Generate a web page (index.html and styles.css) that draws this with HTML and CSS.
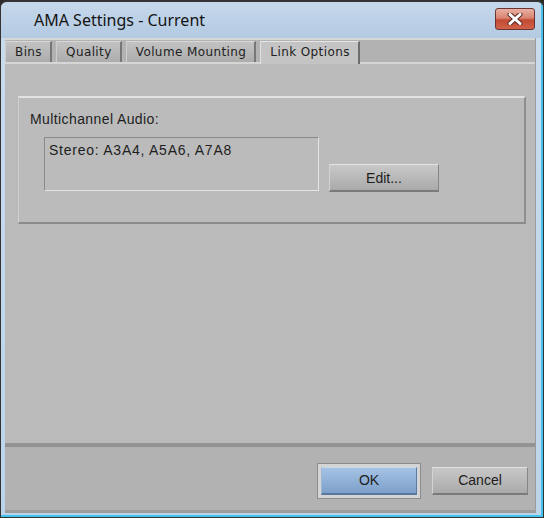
FILE: index.html
```html
<!DOCTYPE html>
<html lang="en">
  <head>
    <meta charset="UTF-8" />
    <meta name="viewport" content="width=device-width, initial-scale=1.0" />
    <title>AMA Settings - Current</title>
    <link rel="stylesheet" href="styles.css">
  </head>
  <body>
    <div class="window">
      <div class="titlebar">
        <span class="title">AMA Settings - Current</span>
        <button class="close" aria-label="Close">
          <svg width="18" height="12" viewBox="0 0 18 12">
            <path d="M4 1.5 L14 10.5 M14 1.5 L4 10.5" stroke="#5b2a24" stroke-width="5" stroke-linecap="round" />
            <path d="M4 1.5 L14 10.5 M14 1.5 L4 10.5" stroke="#ffffff" stroke-width="3" stroke-linecap="round" />
          </svg>
        </button>
      </div>
      <div class="client">
        <div class="tabs">
          <div class="tab">Bins</div>
          <div class="tab">Quality</div>
          <div class="tab">Volume Mounting</div>
          <div class="tab active">Link Options</div>
        </div>
        <div class="pane">
          <div class="group">
            <div class="label">Multichannel Audio:</div>
            <div class="row">
              <div class="field">Stereo: A3A4, A5A6, A7A8</div>
              <button class="btn edit">Edit...</button>
            </div>
          </div>
        </div>
        <div class="footer">
          <div class="focus">
            <button class="btn primary">OK</button>
          </div>
          <button class="btn cancel">Cancel</button>
        </div>
      </div>
    </div>
  </body>
</html>
```

FILE: styles.css
```css
body {
  margin: 0;
  background: #2b2b2b;
  font-family: "Liberation Sans", Arial, sans-serif;
}
.window {
  width: 544px;
  height: 518px;
  box-sizing: border-box;
  display: flex;
  flex-direction: column;
  border: 1px solid #333;
  border-top-width: 2px;
  border-radius: 7px 7px 0 0;
  padding: 0 7px 4px 4px;
  background: linear-gradient(#c6d8eb, #b3cae2 36px, #c9dcee 36px, #bcd4ea);
  box-shadow: inset -2px -2px 0 #42c2ee;
}
.titlebar {
  height: 36px;
  display: flex;
  align-items: center;
  padding: 0 1px 0 29px;
}
.title {
  font-family: "Noto Sans", sans-serif;
  font-size: 16px;
  color: #141414;
}
.close {
  margin-left: auto;
  align-self: flex-start;
  margin-top: 6px;
  width: 40px;
  height: 22px;
  padding: 0;
  display: flex;
  align-items: center;
  justify-content: center;
  border: 1px solid #6a3530;
  border-radius: 3px;
  background: linear-gradient(#eab0a4, #d98470 45%, #c24a33 55%, #d0634a);
}
.client {
  flex: 1;
  display: flex;
  flex-direction: column;
  background: #bababa;
  border-right: 1px solid #9a9a9a;
}
.tabs {
  display: flex;
  align-items: flex-end;
  height: 24px;
  background: linear-gradient(#d6d6d6 0 2px, #b2b2b2 2px);
}
.tab {
  height: 20px;
  line-height: 20px;
  padding: 0 8px 0 9px;
  margin-right: 4px;
  font-family: "DejaVu Sans", Verdana, sans-serif;
  font-size: 12px;
  letter-spacing: 0.4px;
  color: #222;
  background: linear-gradient(#c2c2c2, #acacac);
  border-top: 1px solid #d8d8d8;
  border-left: 1px solid #cdcdcd;
  border-right: 2px solid #777;
}
.tab.active {
  position: relative;
  height: 22px;
  margin-bottom: -2px;
  line-height: 20px;
  background: #c4c4c4;
  border-top-color: #e6e6e6;
  border-left-color: #e0e0e0;
  border-right-color: #6e6e6e;
}
.pane {
  flex: 1;
  padding: 32px 9px 0 13px;
  border-top: 2px solid #d6d6d6;
}
.group {
  height: 111px;
  padding: 13px 0 0 11px;
  background: #bbbbbb;
  border-top: 2px solid #e2e2e2;
  border-left: 1px solid #cfcfcf;
  border-right: 2px solid #8e8e8e;
  border-bottom: 2px solid #8a8a8a;
}
.label {
  font-size: 14px;
  line-height: 16px;
  letter-spacing: 0.4px;
  color: #1e1e1e;
}
.row {
  display: flex;
  align-items: flex-end;
  margin: 10px 0 0 14px;
}
.field {
  width: 269px;
  height: 48px;
  padding: 4px 0 0 4px;
  font-size: 14px;
  line-height: 16px;
  letter-spacing: 0.75px;
  color: #1e1e1e;
  border-top: 1px solid #8a8a8a;
  border-left: 1px solid #8a8a8a;
  border-bottom: 1px solid #e4e4e4;
  border-right: 1px solid #e4e4e4;
}
.btn {
  height: 28px;
  padding: 0;
  font-family: "Liberation Sans", Arial, sans-serif;
  font-size: 14px;
  color: #1e1e1e;
  background: linear-gradient(#c8c8c8, #aaaaaa);
  border-top: 1px solid #e2e2e2;
  border-left: 1px solid #d2d2d2;
  border-right: 1px solid #858585;
  border-bottom: 2px solid #7a7a7a;
}
.edit {
  width: 110px;
  margin: 0 0 -1px 10px;
}
.footer {
  height: 59px;
  display: flex;
  align-items: center;
  justify-content: flex-end;
  gap: 11px;
  padding: 4px 7px 0 0;
  background: #b2b2b2;
  border-top: 4px solid #939393;
  border-bottom: 3px solid #9c9c9c;
}
.focus {
  padding: 3px;
  background: #d4d4d4;
  border: 1px solid #8c8c8c;
  display: flex;
}
.primary {
  width: 96px;
  background: linear-gradient(#a4c3e4, #7e9fca);
  border-top-color: #c4d8ee;
  border-left-color: #9db8d8;
  border-right-color: #5c7aa4;
  border-bottom-color: #5a77a0;
}
.cancel {
  width: 96px;
}
```
